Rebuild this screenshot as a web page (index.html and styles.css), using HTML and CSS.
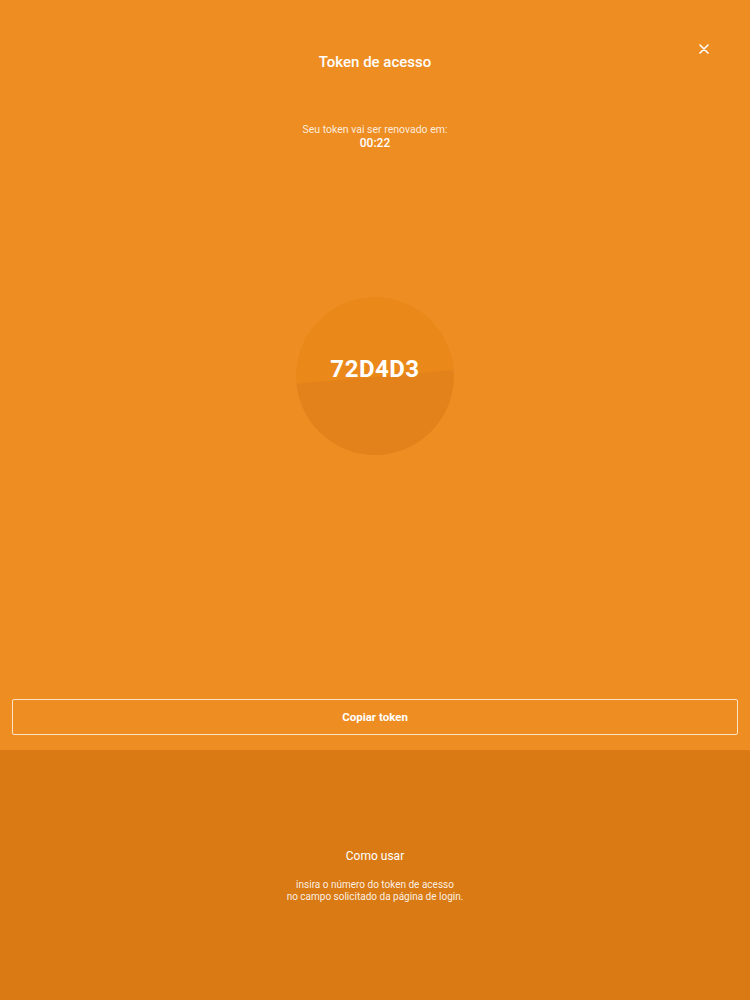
FILE: index.html
```html
<!DOCTYPE html>
<html lang="pt-BR">
<head>
    <meta charset="UTF-8">
    <meta name="viewport" content="width=device-width, initial-scale=1.0">
    <title>Token de acesso</title>
    <link rel="stylesheet" href="styles.css">
</head>
<body>
    <div class="token-page">
        <div class="header">
            <h1>Token de acesso</h1>
            <button class="close" aria-label="Fechar">
                <svg width="10" height="10" viewBox="0 0 10 10">
                    <path d="M1 1 L9 9 M9 1 L1 9" stroke="#fff" stroke-width="1.6" stroke-linecap="round"/>
                </svg>
            </button>
        </div>

        <div class="timer">
            <p>Seu token vai ser renovado em:</p>
            <strong>00:22</strong>
        </div>

        <div class="circle-wrap">
            <div class="circle">
                <span>72D4D3</span>
            </div>
        </div>

        <div class="actions">
            <button class="btn-outline">Copiar token</button>
        </div>
    </div>

    <div class="howto">
        <h2>Como usar</h2>
        <p>insira o número do token de acesso<br>no campo solicitado da página de login.</p>
    </div>
</body>
</html>
```

FILE: styles.css
```css
body {
    margin: 0;
    font-family: Roboto, "Noto Sans", Arial, sans-serif;
    color: #fff;
    background: #d97a14;
}
.token-page {
    background: #ee8d22;
    height: 750px;
    display: flex;
    flex-direction: column;
}
.header {
    position: relative;
    padding-top: 53px;
    text-align: center;
}
.header h1 {
    margin: 0;
    font-size: 15px;
    font-weight: 500;
    line-height: 18px;
}
.close {
    position: absolute;
    top: 39px;
    right: 36px;
    width: 20px;
    height: 20px;
    padding: 0;
    border: none;
    background: none;
    display: flex;
    align-items: center;
    justify-content: center;
    cursor: pointer;
}
.timer {
    margin-top: 52px;
    text-align: center;
}
.timer p {
    margin: 0;
    font-size: 10.5px;
    line-height: 13px;
    color: rgba(255, 255, 255, 0.85);
}
.timer strong {
    display: block;
    font-size: 12px;
    font-weight: 500;
    line-height: 14px;
}
.circle-wrap {
    margin-top: 147px;
    display: flex;
    justify-content: center;
}
.circle {
    width: 158px;
    height: 158px;
    border-radius: 50%;
    background: linear-gradient(175deg, #ea881a 0%, #ea881a 50%, #e3821a 51%, #e3821a 100%);
    display: flex;
    align-items: center;
    justify-content: center;
}
.circle span {
    font-size: 24px;
    font-weight: 700;
    letter-spacing: 0.5px;
    margin-top: -14px;
}
.actions {
    margin-top: auto;
    padding: 0 12px 15px;
}
.btn-outline {
    width: 100%;
    height: 36px;
    background: transparent;
    border: 1px solid rgba(255, 255, 255, 0.75);
    border-radius: 2px;
    color: #fff;
    font-family: inherit;
    font-size: 11.5px;
    font-weight: 700;
    cursor: pointer;
}
.howto {
    height: 250px;
    text-align: center;
    padding-top: 99px;
    box-sizing: border-box;
}
.howto h2 {
    margin: 0 0 16px;
    font-size: 12px;
    font-weight: 400;
    line-height: 14px;
}
.howto p {
    margin: 0;
    font-size: 10px;
    line-height: 12px;
    color: rgba(255, 255, 255, 0.9);
}
```
